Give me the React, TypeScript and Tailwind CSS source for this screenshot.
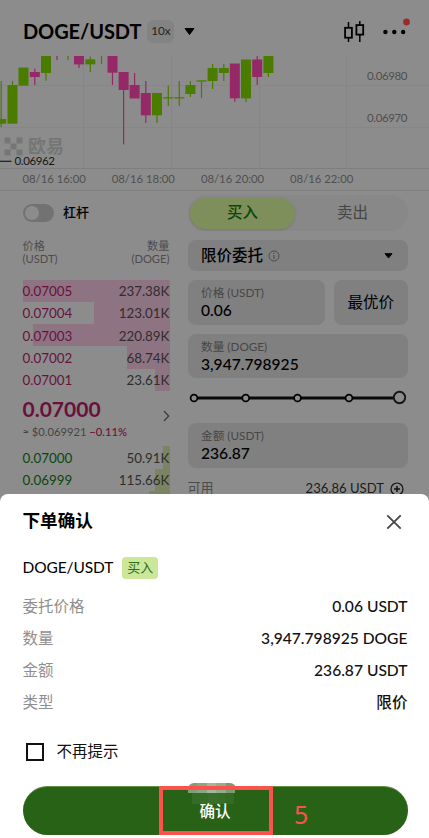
import React from "react";
import clsx from "clsx";

const GREEN = "#4a7c00";
const PINK = "#952866";

type Candle = { x: number; top?: number; bottom?: number; high: number; low: number; up: boolean };

const candles: Candle[] = [
  { x: 1.2, top: 119, bottom: 123.7, high: 81, low: 127, up: true },
  { x: 12.5, top: 85, bottom: 123.7, high: 81, low: 123, up: true },
  { x: 23.5, top: 67.6, bottom: 85.7, high: 68, low: 85, up: true },
  { x: 34.8, top: 72, bottom: 77, high: 68.5, low: 85, up: false },
  { x: 46, top: 56, bottom: 73, high: 56, low: 80.7, up: true },
  { x: 57, high: 56, low: 60, up: false },
  { x: 68, high: 56, low: 60, up: true },
  { x: 79, top: 56, bottom: 64.4, high: 56, low: 68, up: false },
  { x: 90.3, top: 59.3, bottom: 64.3, high: 56.5, low: 72, up: true },
  { x: 101.5, high: 56, low: 64, up: true },
  { x: 112.5, top: 56, bottom: 72.7, high: 56, low: 85, up: false },
  { x: 123.6, top: 72, bottom: 90, high: 72, low: 144.5, up: false },
  { x: 134.6, top: 85, bottom: 98.5, high: 73, low: 98, up: false },
  { x: 145.8, top: 93, bottom: 115.3, high: 81, low: 123, up: false },
  { x: 157, top: 93, bottom: 115.3, high: 93, low: 123, up: true },
  { x: 168.3, top: 97.2, bottom: 98.5, high: 85.5, low: 106, up: true },
  { x: 179.3, top: 97.2, bottom: 98.5, high: 81, low: 106, up: true },
  { x: 190.4, top: 85, bottom: 94, high: 81, low: 97, up: true },
  { x: 201.5, top: 80.3, bottom: 81.6, high: 81, low: 98, up: true },
  { x: 212.6, top: 68, bottom: 81, high: 64, low: 89, up: true },
  { x: 223.8, top: 68, bottom: 73, high: 64, low: 81, up: true },
  { x: 234.8, top: 63.5, bottom: 98.3, high: 64, low: 102, up: false },
  { x: 246, top: 59.5, bottom: 98.3, high: 60, low: 102, up: true },
  { x: 257.2, top: 59.5, bottom: 77, high: 56, low: 85, up: false },
  { x: 268.4, top: 56, bottom: 73, high: 56, low: 77, up: true },
];

function Chart() {
  return (
    <svg className="block h-[113px] w-[429px] shrink-0" viewBox="0 56 429 113">
      <g stroke="#868686" strokeWidth="1">
        {[83.5, 171.5, 259.5, 346.5].map((x) => (
          <line key={x} x1={x} x2={x} y1="56" y2="168" />
        ))}
        <line x1="0" x2="429" y1="85.5" y2="85.5" />
        <line x1="0" x2="429" y1="127.5" y2="127.5" />
        <line x1="0" x2="429" y1="168.5" y2="168.5" stroke="#7e7e7e" />
      </g>
      <g fill="#747776">
        <rect x="4.5" y="137.5" width="6" height="6" />
        <rect x="16.5" y="137.5" width="6" height="6" />
        <rect x="10.5" y="143.5" width="6" height="6" />
        <rect x="4.5" y="149.5" width="6" height="6" />
        <rect x="16.5" y="149.5" width="6" height="6" />
        <text x="28" y="152.5" fontSize="18" className="font-['Noto_Sans_CJK_SC',sans-serif] font-bold">欧易</text>
      </g>
      {candles.map((c) => (
        <g key={c.x} fill={c.up ? GREEN : PINK}>
          <rect x={c.x - 0.6} y={c.high} width="1.2" height={c.low - c.high} />
          {c.top !== undefined && c.bottom !== undefined && (
            <rect x={c.x - 5} y={c.top} width="10" height={c.bottom - c.top} />
          )}
        </g>
      ))}
      <line x1="0" x2="11.5" y1="161.3" y2="161.3" stroke="#1c1c1c" strokeWidth="1.2" />
      <g className="font-[Lato,sans-serif]" fontSize="11.5">
        <text x="14.5" y="165.3" fill="#161616" textLength="40.5">0.06962</text>
        <text x="367" y="80" fill="#4f4f4f" textLength="40.5">0.06980</text>
        <text x="367" y="122.3" fill="#4f4f4f" textLength="40.5">0.06970</text>
      </g>
    </svg>
  );
}

const asks = [
  { price: "0.07005", amount: "237.38K", bar: "w-[147px]" },
  { price: "0.07004", amount: "123.01K", bar: "w-[76px]" },
  { price: "0.07003", amount: "220.89K", bar: "w-[137px]" },
  { price: "0.07002", amount: "68.74K", bar: "w-[43px]" },
  { price: "0.07001", amount: "23.61K", bar: "w-[15px]" },
];
const bids = [
  { price: "0.07000", amount: "50.91K", bar: "w-[7px]" },
  { price: "0.06999", amount: "115.66K", bar: "w-[15px]" },
  { price: "", amount: "", bar: "w-[21px]" },
];

function BookRow({ price, amount, bar, ask }: { price: string; amount: string; bar: string; ask?: boolean }) {
  return (
    <div className="relative flex h-[22.3px] shrink-0 items-center justify-between pt-px text-[13.4px]">
      <div className={clsx("absolute inset-y-0 right-0", bar, ask ? "bg-[#8e7383]" : "bg-[#7b8462]")} />
      <span className={clsx("relative", ask ? "text-[#69113b]" : "text-[#0b460b]")}>{price}</span>
      <span className="relative text-[#2e2e2e]">{amount}</span>
    </div>
  );
}

function Field({ label, value, className }: { label: string; value: string; className?: string }) {
  return (
    <div className={clsx("flex h-[44.5px] flex-col justify-center rounded-lg bg-[#808080] pl-[13.5px]", className)}>
      <div className="text-[11.7px] leading-[17px] text-[#474747]">{label}</div>
      <div className="text-[15.6px] leading-[19px] font-medium text-black">{value}</div>
    </div>
  );
}

function Slider() {
  return (
    <svg className="mt-[11px] block h-[18px] w-[220px]" viewBox="0.5 0 220 18">
      <line x1="6" x2="212" y1="9" y2="9" stroke="#0a0a0a" strokeWidth="2.8" />
      {[6.5, 58.2, 110, 161.5].map((x) => (
        <circle key={x} cx={x} cy="9" r="3.4" fill="#8c8c8c" stroke="#000" strokeWidth="1.7" />
      ))}
      <circle cx="212" cy="8.5" r="5.7" fill="#8c8c8c" stroke="#161616" strokeWidth="1.9" />
    </svg>
  );
}

const details = [
  ["委托价格", "0.06 USDT"],
  ["数量", "3,947.798925 DOGE"],
  ["金额", "236.87 USDT"],
  ["类型", "限价"],
];

const mosaic = ["bg-[#7f9f76]", "bg-[#8aa781]", "bg-[#a3b79c]", "bg-[#93ad8b]", "bg-[#7b9a72]"];

export default function App() {
  return (
    <div className="flex h-[838px] w-[429px] flex-col overflow-hidden bg-white font-[Lato,'Noto_Sans_CJK_SC',sans-serif]">
      <div className="-mb-2 flex h-[502px] shrink-0 flex-col overflow-hidden bg-[#8c8c8c]">
        <header className="flex h-14 shrink-0 items-center pt-1.5 pl-[23px]">
          <h1 className="text-[20px] font-bold tracking-[-0.1px] text-black">DOGE/USDT</h1>
          <span className="ml-[6px] flex h-[23px] w-[27px] items-center justify-center rounded-md bg-[#838383] text-[11.7px] text-[#222]">10x</span>
          <svg className="ml-[10px] h-[7px] w-[11px]" viewBox="0 0 11 7"><path d="M1 .5h9L5.5 6.5z" fill="#000" stroke="#000" strokeLinejoin="round" /></svg>
          <svg className="ml-[146.5px] h-[28px] w-[70px]" viewBox="342 16.5 70 28">
            <g fill="none" stroke="#000" strokeWidth="1.8">
              <path d="M348.5 21.5V27M348.5 37.5v4M359.8 20.5v4M359.8 34.5v7" strokeWidth="1.5" />
              <rect x="345.1" y="27.3" width="6.8" height="9.9" />
              <rect x="356.4" y="24.6" width="6.8" height="9.5" />
            </g>
            <circle cx="385.4" cy="31.5" r="2.2" /><circle cx="394.3" cy="31.5" r="2.2" /><circle cx="403.2" cy="31.5" r="2.2" />
            <circle cx="406.5" cy="21.5" r="3.4" fill="#9a2b27" />
          </svg>
        </header>
        <Chart />
        <div className="flex h-[22px] shrink-0 items-center gap-[27.7px] border-b border-[#808080] pl-[22.5px] text-[11.3px] text-[#4f4f4f]">
          <span className="w-[61.5px] whitespace-nowrap">08/16 16:00</span>
          <span className="w-[61.5px] whitespace-nowrap">08/16 18:00</span>
          <span className="w-[61.5px] whitespace-nowrap">08/16 20:00</span>
          <span className="w-[61.5px] whitespace-nowrap">08/16 22:00</span>
        </div>
        <main className="flex pl-[22.5px]">
          <section className="w-[147px] pt-[13px]">
            <div className="flex h-[18px] items-center">
              <span className="flex h-[18px] w-[31px] items-center rounded-full bg-[#727272] pl-[2px]">
                <span className="size-[14px] rounded-full bg-[#8c8c8c]" />
              </span>
              <span className="ml-[9.5px] text-[13px] font-medium text-black">杠杆</span>
            </div>
            <div className="mt-[17px] mb-[14.5px] flex h-[26px] justify-between text-[11.2px] leading-[13px] text-[#4c4c4c]">
              <div>价格<br />(USDT)</div>
              <div className="text-right">数量<br />(DOGE)</div>
            </div>
            {asks.map((r) => <BookRow key={r.price} {...r} ask />)}
            <div className="flex h-[55.5px] items-center justify-between">
              <div className="-mt-[3px]">
                <div className="text-[21px] leading-[28px] font-bold text-[#69113b]">0.07000</div>
                <div className="text-[11.2px] leading-[17px] whitespace-nowrap text-[#454545]">≈ $0.069921 <span className="font-medium text-[#69113b]">−0.11%</span></div>
              </div>
              <svg className="mt-[-6px] h-[12px] w-[7px]" viewBox="0 0 7 12"><path d="M1 1l4.7 5L1 11" fill="none" stroke="#3a3a3a" strokeWidth="1.2" /></svg>
            </div>
            {bids.map((r) => <BookRow key={r.price} {...r} />)}
          </section>
          <section className="ml-[18px] w-[220px] pt-[4px]">
            <div className="flex h-[36px] items-center rounded-full bg-[#888] px-[2.5px] text-[15.5px]">
              <div className="flex h-[31px] w-[105px] items-center justify-center rounded-full bg-[#7e8f5b] font-medium text-[#0b460b] shadow">买入</div>
              <div className="flex-1 pl-[5px] text-center text-[#454545]">卖出</div>
            </div>
            <div className="mt-[9px] flex h-[31px] items-center rounded-lg bg-[#808080] pr-[14px] pl-[13.5px]">
              <span className="text-[15.5px] font-medium text-black">限价委托</span>
              <svg className="ml-[5px] size-[12px]" viewBox="0 0 12 12"><circle cx="6" cy="6" r="5" fill="none" stroke="#4c4c4c" /><path d="M6 5v4M6 2.8v1.2" stroke="#4c4c4c" strokeWidth="1.1" /></svg>
              <svg className="mr-[1px] ml-auto h-[6px] w-[9px]" viewBox="0 0 9 6"><path d="M1 .7h7L4.5 5z" stroke="#000" strokeLinejoin="round" /></svg>
            </div>
            <div className="mt-[9px] flex gap-[9px]">
              <Field label="价格 (USDT)" value="0.06" className="w-[137.5px]" />
              <div className="flex flex-1 items-center justify-center rounded-lg bg-[#808080] text-[15.5px] text-black">最优价</div>
            </div>
            <Field label="数量 (DOGE)" value="3,947.798925" className="mt-[9px]" />
            <Slider />
            <Field label="金额 (USDT)" value="236.87" className="mt-[16px]" />
            <div className="mt-[11px] flex h-5 items-center text-[13.1px] text-[#1c1c1c]">
              <span className="text-[#4c4c4c]">可用</span>
              <span className="ml-auto">236.86 USDT</span>
              <svg className="mr-[3.5px] ml-[6px] size-[14px]" viewBox="0 0 14 14" fill="none" stroke="#111" strokeWidth="1.2"><circle cx="7" cy="7" r="6" /><path d="M7 4v6M4 7h6" strokeWidth="1.5" /></svg>
            </div>
          </section>
        </main>
      </div>
      <div className="relative h-[344px] shrink-0 rounded-t-lg bg-white pr-[21.5px] pl-[22.5px] text-[15.5px] text-[#111]">
        <div className="flex h-[55px] items-center justify-between">
          <h2 className="text-[17.6px] font-bold text-black">下单确认</h2>
          <svg className="mr-[6px] size-[16px]" viewBox="0 0 16 16"><path d="M1.3 1.3l13.4 13.4M14.7 1.3L1.3 14.7" stroke="#454545" strokeWidth="1.8" /></svg>
        </div>
        <div className="mt-[8px] flex h-[22px] items-center">
          <span className="tracking-[-0.1px] text-black">DOGE/USDT</span>
          <span className="ml-[9px] flex h-[22px] w-[36px] items-center justify-center rounded bg-[#cbe79a] text-[13px] text-[#2b6b1b]">买入</span>
        </div>
        <div className="mt-[12px]">
          {details.map(([k, v]) => (
            <div key={k} className="flex h-8 items-center justify-between">
              <span className="text-[#8f8f8f]">{k}</span>
              <span className="text-[15.6px] font-medium">{v}</span>
            </div>
          ))}
        </div>
        <div className="mt-[22px] flex h-[22px] items-center">
          <span className="ml-[3px] size-[18.5px] border-2 border-[#111]" />
          <span className="ml-[12.5px]">不再提示</span>
        </div>
        <div className="relative mt-[23px] flex h-[49px] items-center justify-center rounded-full border-t border-[#5f9146] bg-[#286216] text-white">
          <span className="pt-px font-medium">确认</span>
          <div className="absolute top-[-4px] left-[165px] flex h-[10px] w-[48px] overflow-hidden rounded-t-md">
            {mosaic.map((c) => <span key={c} className={clsx("flex-1", c)} />)}
          </div>
          <div className="absolute top-[6px] left-[169px] flex h-[11px] w-[42px] opacity-15">
            {mosaic.map((c) => <span key={c} className={clsx("flex-1", c)} />)}
          </div>
          <div className="absolute top-[-1px] left-[136.5px] h-[49px] w-[114px] border-4 border-[#fc524e]" />
          <span className="absolute top-[10px] left-[271.5px] font-['Noto_Sans',sans-serif] text-[25px] leading-[34px] text-[#f5554a]">5</span>
        </div>
      </div>
    </div>
  );
}
